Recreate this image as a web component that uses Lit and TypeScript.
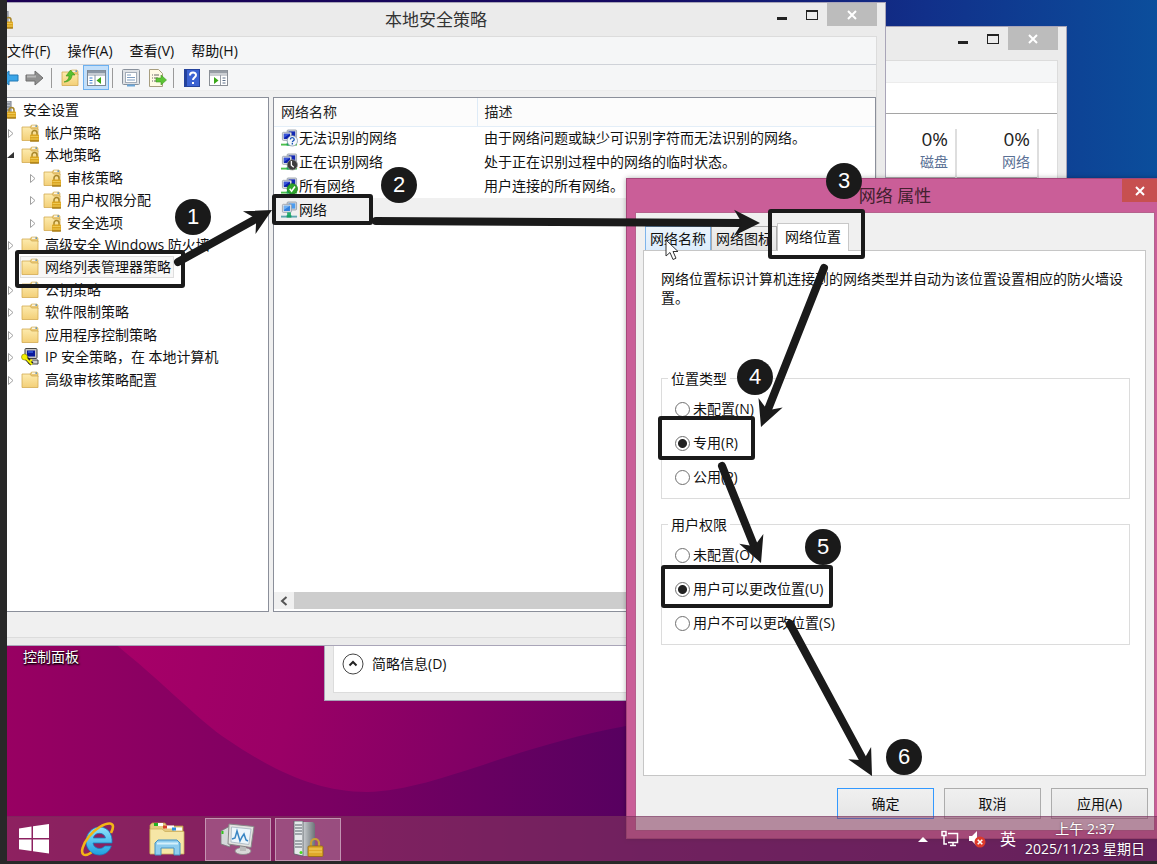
import { LitElement, html, css, svg, nothing } from 'lit';
import { customElement, state } from 'lit/decorators.js';
import { classMap } from 'lit/directives/class-map.js';

interface TreeNode {
  label: string;
  level: number;
  icon: 'server' | 'folder' | 'folder-lock' | 'ipsec';
  expander?: 'open' | 'closed';
}

const TREE: TreeNode[] = [
  { label: '安全设置', level: 0, icon: 'server' },
  { label: '帐户策略', level: 1, icon: 'folder-lock', expander: 'closed' },
  { label: '本地策略', level: 1, icon: 'folder-lock', expander: 'open' },
  { label: '审核策略', level: 2, icon: 'folder-lock', expander: 'closed' },
  { label: '用户权限分配', level: 2, icon: 'folder-lock', expander: 'closed' },
  { label: '安全选项', level: 2, icon: 'folder-lock', expander: 'closed' },
  { label: '高级安全 Windows 防火墙', level: 1, icon: 'folder', expander: 'closed' },
  { label: '网络列表管理器策略', level: 1, icon: 'folder' },
  { label: '公钥策略', level: 1, icon: 'folder', expander: 'closed' },
  { label: '软件限制策略', level: 1, icon: 'folder', expander: 'closed' },
  { label: '应用程序控制策略', level: 1, icon: 'folder', expander: 'closed' },
  { label: 'IP 安全策略，在 本地计算机', level: 1, icon: 'ipsec', expander: 'closed' },
  { label: '高级审核策略配置', level: 1, icon: 'folder', expander: 'closed' },
];

const NETWORKS = [
  { name: '无法识别的网络', badge: 'unknown', text: '由于网络问题或缺少可识别字符而无法识别的网络。' },
  { name: '正在识别网络', badge: 'busy', text: '处于正在识别过程中的网络的临时状态。' },
  { name: '所有网络', badge: 'ok', text: '用户连接的所有网络。' },
  { name: '网络', badge: '', text: '' },
];

const STEPS = [
  { x: 186, y: 217 },
  { x: 392, y: 185 },
  { x: 837, y: 181 },
  { x: 748, y: 377 },
  { x: 816, y: 547 },
  { x: 897, y: 757 },
];

// x, y, width, height of each highlighted area on the desktop
const FRAMES = [
  [10, 252, 166, 34],
  [267, 196, 97, 27],
  [763, 211, 93, 46],
  [653, 418, 93, 40],
  [656, 567, 168, 39],
];

// x1, y1, x2, y2
const ARROWS = [
  [171, 262, 265, 210],
  [369, 221, 753, 223],
  [817, 268, 754, 427],
  [715, 466, 754, 563],
  [783, 624, 865, 776],
];

const lock = (x: number, y: number) => svg`
  <g transform="translate(${x} ${y})">
    <path d="M2 5V3a2.5 2.5 0 0 1 5 0v2" fill="none" stroke="#a8862a" stroke-width="1.5"/>
    <rect x="0" y="4.5" width="9" height="7" rx="1" fill="#dba520"/>
    <path d="M0.5 6.5h8M0.5 9h8" stroke="#f3d060" stroke-width="0.8"/>
    <path d="M0 11h9" stroke="#8f6812"/>
  </g>`;

const folder = svg`
  <path d="M9 3l1.5-2H16l1 1.5V6H9z" fill="#e9c877" stroke="#cfa74e" stroke-width="0.6"/>
  <path d="M11 2.2h3.5" stroke="#fff" stroke-width="1.2"/>
  <path d="M14.5 2.2h1.5" stroke="#3d8ad8" stroke-width="1.2"/>
  <path d="M1 3h8l1.5 2H17v11.5H1z" fill="url(#folder-fill)" stroke="#d3ab52" stroke-width="0.8"/>`;

const folderFill = svg`
  <defs>
    <linearGradient id="folder-fill" x1="0" y1="0" x2="0" y2="1">
      <stop offset="0" stop-color="#fdebae"/><stop offset="1" stop-color="#f3cf77"/>
    </linearGradient>
  </defs>`;

const monitors = (dark: boolean) => svg`
  <rect x="6.5" y="0.5" width="10" height="8.5" rx="1" fill="#cfd3d8" stroke="#8d96a3" stroke-width="0.8"/>
  <rect x="8" y="2" width="7" height="5.5" fill="${dark ? '#1227b5' : '#4b9cf0'}"/>
  <rect x="1.5" y="3" width="9.5" height="8.5" rx="1" fill="#dfe3e8" stroke="#8d96a3" stroke-width="0.8"/>
  <rect x="3" y="4.5" width="6.5" height="5.5" fill="${dark ? '#0b1fae' : '#2f7fe0'}"/>
  <path d="M3 4.5h6.5L3 9z" fill="${dark ? '#4c6bea' : '#8cc4fa'}" opacity="0.7"/>
  <rect x="6.5" y="11.5" width="4" height="4" fill="#27ae70"/>
  <path d="M0 16h17" stroke="${dark ? '#4cc04c' : '#5ea6b0'}" stroke-width="2"/>
  <rect x="6" y="14.5" width="5" height="2.5" fill="#17a060"/>`;

@customElement('app-root')
export class AppRoot extends LitElement {
  @state() private selectedNode = 7;
  @state() private selectedNetwork = 3;
  @state() private activeTab = 2;

  static styles = css`
    :host {
      display: block;
      box-sizing: border-box;
      height: 100vh;
      padding: 0 0 3px 7px;
      background: #282828;
      color: #111;
      font: 14px/20px "Open Sans", "Noto Sans CJK SC", sans-serif;
    }

    * {
      box-sizing: border-box;
    }

    button {
      font: inherit;
      color: inherit;
      border: 0;
      padding: 0;
      background: none;
    }

    svg {
      display: block;
      flex: none;
    }

    .desktop {
      position: relative;
      height: 100%;
      overflow: hidden;
      background: #700062;
    }

    .wallpaper,
    .overlay {
      position: absolute;
      inset: 0;
      width: 100%;
      height: 100%;
    }

    .overlay {
      pointer-events: none;
    }

    .shortcut {
      position: absolute;
      left: 16px;
      top: 647px;
      color: #fff;
      text-decoration: none;
      text-shadow: 1px 1px 2px #000, 0 1px 2px #000;
    }

    /* windows */

    .window {
      position: absolute;
      display: flex;
      flex-direction: column;
      background: #ebebeb;
      border: 1px solid #a9a5b8;
    }

    .titlebar {
      display: grid;
      grid-template-columns: 1fr auto 1fr;
      height: 33px;
      padding-right: 8px;
      flex: none;
    }

    .titlebar h1 {
      margin: 0;
      padding-right: 12px;
      font-size: 17px;
      font-weight: 400;
      line-height: 34px;
      color: #333;
    }

    .app-icon {
      margin: 8px 0 0 -11px;
    }

    .controls {
      display: flex;
      justify-content: flex-end;
      align-items: flex-start;
    }

    .controls button {
      width: 30px;
      height: 23px;
      display: grid;
      place-items: center;
    }

    .controls .close {
      width: 50px;
      background: #bcbcbc;
    }

    .policy {
      left: -1px;
      top: 2px;
      width: 880px;
      height: 644px;
    }

    .client {
      flex: 1;
      display: flex;
      flex-direction: column;
      margin-right: 8px;
      background: #f0f0f0;
      border: 1px solid #dcdcdc;
      border-left: 0;
      min-height: 0;
    }

    .menubar {
      display: flex;
      gap: 17px;
      height: 28px;
      align-items: center;
      background: #f5f6f7;
      border-bottom: 1px solid #cfd2d8;
    }

    .toolbar {
      display: flex;
      align-items: center;
      height: 26px;
      background: #f5f6f7;
      border-bottom: 1px solid #ececec;
    }

    .toolbar button {
      width: 26px;
      height: 25px;
      display: grid;
      place-items: center;
    }

    .toolbar button:first-child {
      margin-left: -11px;
    }

    .toolbar .pressed {
      background: #c2dffa;
      border: 1px solid #6cb0f0;
    }

    .divider {
      width: 1px;
      height: 20px;
      margin: 0 5px 0 3px;
      background: #9a9a9a;
    }

    .panes {
      flex: 1;
      display: flex;
      gap: 4px;
      padding: 6px 0 0;
      min-height: 0;
    }

    .tree,
    .list {
      background: #fff;
      border: 1px solid #8b8f9a;
    }

    .tree {
      width: 262px;
      border-left: 0;
    }

    .tree ul {
      list-style: none;
      margin: 1px 0 0;
      padding: 0;
      min-height: 292px;
      display: grid;
      grid-auto-rows: 1fr;
    }

    .tree li {
      display: flex;
      align-items: center;
      gap: 3px;
      white-space: nowrap;
    }

    .tree .level-0 {
      margin-left: -8px;
    }

    .tree .level-2 {
      padding-left: 22px;
    }

    .twisty {
      width: 11px;
      height: 12px;
    }

    .node {
      display: flex;
      align-items: center;
      gap: 6px;
      padding-right: 2px;
    }

    .node.selected {
      background: #f7f7f7;
      outline: 1px solid #dedede;
    }

    .list {
      flex: 1;
      display: flex;
      flex-direction: column;
      justify-content: space-between;
      overflow: hidden;
    }

    .list table {
      width: 100%;
      border-collapse: collapse;
      table-layout: fixed;
      white-space: nowrap;
    }

    .list th {
      height: 28px;
      padding: 0 7px;
      text-align: left;
      font-weight: 400;
      background: #fcfcfc;
      border-bottom: 1px solid #e3eef8;
      color: #222;
    }

    .list th:first-child {
      width: 203px;
      border-right: 1px solid #deebf7;
    }

    .list td {
      height: 24px;
      padding: 0 7px;
    }

    .list .selected {
      background: #f0f0f0;
    }

    .item {
      display: flex;
      align-items: center;
      gap: 1px;
    }

    .scrollbar {
      display: flex;
      height: 17px;
      margin-bottom: 2px;
      background: #f0f0f0;
    }

    .scrollbar button {
      width: 20px;
      display: grid;
      place-items: center;
    }

    .thumb {
      flex: 1;
      background: #cdcdcd;
    }

    .statusbar {
      height: 25px;
    }

    .frame-bottom {
      height: 7px;
    }

    .taskman {
      left: 317px;
      top: 26px;
      width: 743px;
      height: 675px;
    }

    .taskman .client {
      margin: 0 8px;
      border-left: 1px solid #dcdcdc;
      background: #fff;
    }

    .strip {
      height: 22px;
      background: #f5f6f7;
      border-bottom: 1px solid #ececec;
    }

    .tabs-line {
      height: 31px;
      border-bottom: 1px solid #a5a5a5;
    }

    .usage {
      margin: 15px 18px 0 auto;
      border-collapse: collapse;
    }

    .usage th {
      width: 82px;
      height: 48px;
      padding: 0 7px 0 0;
      vertical-align: top;
      text-align: right;
      font-weight: 400;
      color: #5a7095;
      border-right: 2px solid #dedede;
      border-bottom: 1px solid #b0b0b0;
      line-height: 24px;
    }

    .usage strong {
      display: block;
      font-size: 19px;
      font-weight: 400;
      line-height: 21px;
      color: #222;
    }

    .fewer {
      display: flex;
      align-items: center;
      gap: 8px;
      margin: auto 0 17px 8px;
      line-height: 22px;
    }

    /* properties dialog */

    .dialog {
      left: 619px;
      top: 178px;
      width: 538px;
      height: 661px;
      padding: 0 8px 7px;
      background: #ca5e98;
      border-color: #a5477a;
      box-shadow: 0 0 5px rgba(0, 0, 0, 0.3);
    }

    .dialog .titlebar {
      padding: 0;
    }

    .dialog h1 {
      padding: 0;
      color: #43202f;
    }

    .dialog .controls .close {
      width: 35px;
      margin-right: -2px;
      background: #c75050;
    }

    .sheet {
      flex: 1;
      display: flex;
      flex-direction: column;
      background: #f0f0f0;
      border: 1px solid #b5628d;
      padding-top: 10px;
    }

    .tabs {
      display: flex;
      align-items: flex-end;
      padding-left: 9px;
    }

    .tabs button {
      height: 24px;
      padding: 0 4px;
      background: linear-gradient(#f0f0f0, #e5e5e5);
      border: 1px solid #acacac;
      border-bottom: 0;
      line-height: 23px;
    }

    .tabs .hot {
      background: linear-gradient(#ecf4fc, #dcecfc);
      border-color: #7eb4ea;
    }

    .tabs .active {
      height: 28px;
      padding: 0 7px 3px;
      background: #fff;
      border-color: #c8c8c8;
      position: relative;
      margin-bottom: -1px;
    }

    .page {
      flex: 1;
      margin: 0 8px 12px 7px;
      padding: 18px 15px 0 17px;
      background: #fff;
      border: 1px solid #c6c6c6;
    }

    .page p {
      margin: 0 0 62px;
      line-height: 19px;
    }

    fieldset {
      margin: 0 0 16px;
      padding: 4px 13px;
      border: 1px solid #dcdcdc;
    }

    legend {
      margin-left: -7px;
      padding: 0 3px;
      line-height: 19px;
    }

    .option {
      display: flex;
      align-items: center;
      gap: 3px;
      height: 34px;
    }

    .option input {
      appearance: none;
      width: 15px;
      height: 15px;
      margin: 0;
      border: 1px solid #707070;
      border-radius: 50%;
      background: #fff;
    }

    .option input:checked {
      background: radial-gradient(circle, #222 4px, #fff 5px);
    }

    .actions {
      display: flex;
      justify-content: flex-end;
      gap: 10px;
      padding: 0 6px 11px 0;
    }

    .actions button {
      width: 97px;
      height: 31px;
      background: linear-gradient(#f0f0f0, #e5e5e5);
      border: 1px solid #acacac;
    }

    .actions button.primary {
      border: 1px solid #3399ff;
    }

    .cursor {
      position: absolute;
      left: 658px;
      top: 239px;
    }

    /* taskbar */

    .taskbar {
      position: absolute;
      left: 0;
      right: 0;
      bottom: 0;
      height: 45px;
      display: flex;
      align-items: center;
      background: rgba(133, 58, 95, 0.56);
      border-top: 1px solid rgba(110, 40, 90, 0.4);
      color: #fff;
    }

    .apps {
      display: flex;
      gap: 4px;
      flex: 1;
    }

    .apps button {
      width: 66px;
      height: 43px;
      display: grid;
      place-items: center;
    }

    .apps .start {
      width: 54px;
    }

    .apps .running {
      background: rgba(255, 255, 255, 0.2);
      border: 1px solid rgba(255, 255, 255, 0.4);
    }

    .tray {
      display: flex;
      align-items: center;
      gap: 9px;
      padding-right: 12px;
    }

    .expand {
      margin-right: 4px;
    }

    .ime {
      font-size: 16px;
      margin-left: 4px;
    }

    .clock {
      text-align: center;
      text-shadow: 0 0 2px rgba(0, 0, 0, 0.5);
    }

    .clock span {
      display: block;
    }

    /* step marks */

    .steps {
      list-style: none;
      margin: 0;
      padding: 0;
    }

    .steps li {
      position: absolute;
      width: 36px;
      height: 36px;
      margin: -18px 0 0 -18px;
      border-radius: 50%;
      background: #1a1a1a;
      color: #fff;
      font: 22px/36px "Liberation Sans", sans-serif;
      text-align: center;
    }
  `;

  private renderWallpaper() {
    return html`
      <svg class="wallpaper" viewBox="0 0 1150 861" preserveAspectRatio="none">
        <defs>
          <linearGradient id="sky" x1="0" x2="1" y1="0" y2="0">
            <stop offset="0" stop-color="#1b0052"/>
            <stop offset="0.55" stop-color="#150a62"/>
            <stop offset="0.8" stop-color="#11308a"/>
            <stop offset="1" stop-color="#0b4e9c"/>
          </linearGradient>
          <linearGradient id="bright" x1="100" x2="640" y1="640" y2="760" gradientUnits="userSpaceOnUse">
            <stop offset="0" stop-color="#a80068"/>
            <stop offset="0.35" stop-color="#9a0066"/>
            <stop offset="1" stop-color="#6a0064"/>
          </linearGradient>
          <linearGradient id="shade" x1="0" x2="1150" y1="0" y2="0" gradientUnits="userSpaceOnUse">
            <stop offset="0" stop-color="#980062"/>
            <stop offset="0.28" stop-color="#7a0062"/>
            <stop offset="0.55" stop-color="#560060"/>
            <stop offset="1" stop-color="#3c0058"/>
          </linearGradient>
        </defs>
        <rect width="1150" height="430" fill="url(#sky)"/>
        <rect y="430" width="1150" height="431" fill="url(#bright)"/>
        <path
          d="M0 600L90 630C150 675 190 720 221 740C265 770 310 792 360 792C430 790 500 748 619 726L1150 700V861H0z"
          fill="url(#shade)"
        />
      </svg>
    `;
  }

  private renderControls() {
    return html`
      <div class="controls">
        <button aria-label="最小化">
          <svg width="12" height="12"><path d="M1 9.5h10" stroke="#222" stroke-width="3"/></svg>
        </button>
        <button aria-label="最大化">
          <svg width="12" height="12">
            <rect x="0.5" y="1.5" width="11" height="9" fill="none" stroke="#222"/>
            <path d="M0 2h12" stroke="#222" stroke-width="2"/>
          </svg>
        </button>
        ${this.renderClose()}
      </div>
    `;
  }

  private renderClose() {
    return html`
      <button class="close" aria-label="关闭">
        <svg width="10" height="10">
          <path d="M1 1l8 8M9 1l-8 8" stroke="#fff" stroke-width="2"/>
        </svg>
      </button>
    `;
  }

  private renderTaskManager() {
    return html`
      <section class="window taskman">
        <div class="titlebar"><span></span><span></span>${this.renderControls()}</div>
        <div class="client">
          <div class="strip"></div>
          <div class="tabs-line"></div>
          <table class="usage">
            <tr>
              <th><strong>0%</strong>磁盘</th>
              <th><strong>0%</strong>网络</th>
            </tr>
          </table>
          <button class="fewer">
            <svg width="22" height="22">
              <circle cx="11" cy="11" r="10" fill="#fff" stroke="#444"/>
              <path d="M7.5 12.5L11 9l3.5 3.5" fill="none" stroke="#222" stroke-width="2"/>
            </svg>
            简略信息(D)
          </button>
        </div>
        <div class="frame-bottom"></div>
      </section>
    `;
  }

  private renderNodeIcon(icon: string) {
    if (icon === 'server') {
      return html`<svg width="18" height="18">
        <rect x="3" y="0" width="9" height="16" fill="#b9bec6" stroke="#767d88"/>
        <path d="M4 3h7M4 6h7M4 9h7" stroke="#6b7481"/>
        ${lock(8, 6)}
      </svg>`;
    }
    if (icon === 'ipsec') {
      return html`<svg width="18" height="18">
        <rect x="4" y="0.5" width="12" height="10" rx="1" fill="#c4c4c4" stroke="#444"/>
        <rect x="6" y="2.5" width="8" height="6" fill="#0a1a9c"/>
        <path d="M7 4h5" stroke="#4c7cff"/>
        <path d="M6 12h11v4H8z" fill="#d0d0d0" stroke="#444"/>
        <path d="M3 8l8 8" stroke="#222" stroke-width="4"/>
        <circle cx="3.5" cy="9" r="3" fill="#f4f000" stroke="#7a7a00" stroke-width="0.6"/>
        <path d="M4 9.5l7 7M9 13l2-1" stroke="#f4f000" stroke-width="2"/>
      </svg>`;
    }
    return html`<svg width="18" height="18">
      ${folderFill}${folder}${icon === 'folder-lock' ? lock(9, 6) : nothing}
    </svg>`;
  }

  private renderTwisty(state?: string) {
    return html`
      <svg class="twisty">
        ${state === 'closed'
          ? svg`<path d="M1.5 2.5v8l4.5-4z" fill="#fff" stroke="#a0a0a0"/>`
          : nothing}
        ${state === 'open' ? svg`<path d="M7 3v6H0z" fill="#333"/>` : nothing}
      </svg>
    `;
  }

  private renderTree() {
    return html`
      <nav class="tree">
        <ul role="tree">
          ${TREE.map(
            (node, i) => html`
              <li
                class="level-${node.level}"
                role="treeitem"
                aria-level=${node.level + 1}
                @click=${() => (this.selectedNode = i)}
              >
                ${node.level ? this.renderTwisty(node.expander) : nothing}
                <span class=${classMap({ node: true, selected: i === this.selectedNode })}>
                  ${this.renderNodeIcon(node.icon)}<span>${node.label}</span>
                </span>
              </li>
            `
          )}
        </ul>
      </nav>
    `;
  }

  private renderNetworkIcon(badge: string) {
    return html`
      <svg width="17" height="18" viewBox="0 0 18 18">
        ${monitors(badge !== '')}
        ${badge === 'unknown'
          ? svg`<circle cx="12" cy="12" r="5.5" fill="#f4f8fc" stroke="#8796a8" stroke-width="0.8"/>
              <path d="M10 10.5c0-2.6 4-2.4 4 0 0 1.4-2 1.4-2 3M12 14.3v1.5" fill="none" stroke="#1c55b8" stroke-width="1.4"/>`
          : nothing}
        ${badge === 'busy'
          ? svg`<circle cx="12" cy="12" r="5.5" fill="#3c3c3c" stroke="#9a9a9a" stroke-width="0.8"/>
              <path d="M11 8v4.5l2.5 2" fill="none" stroke="#fff" stroke-width="1.4"/>`
          : nothing}
        ${badge === 'ok'
          ? svg`<circle cx="12" cy="12" r="5.5" fill="#2fa52b" stroke="#1c7d1a" stroke-width="0.8"/>
              <path d="M9.2 12l2 2.5 3.6-5" fill="none" stroke="#fff" stroke-width="1.7"/>`
          : nothing}
      </svg>
    `;
  }

  private renderToolbar() {
    return html`
      <div class="toolbar">
        <button aria-label="后退">
          <svg width="20" height="16">
            <path d="M19 5h-9V1L1 8l9 7v-4h9z" fill="#3aa5e8" stroke="#2378b4"/>
          </svg>
        </button>
        <button aria-label="前进">
          <svg width="20" height="16">
            <path d="M1 5h9V1l8 7-8 7v-4H1z" fill="#8f8f8f" stroke="#6f6f6f"/>
            <path d="M2 6.5h9" stroke="#b8b8b8" stroke-width="2"/>
          </svg>
        </button>
        <span class="divider"></span>
        <button aria-label="上一级">
          <svg width="18" height="18">
            ${folderFill}${folder}
            <path d="M3 13c3-1 5-3 5-6H5l4.5-6L14 6h-3c0 4-3 7-8 7z" fill="#57c02e" stroke="#3b9418" stroke-width="0.6"/>
          </svg>
        </button>
        <button class="pressed" aria-label="显示树">
          <svg width="19" height="16">
            <rect x="0.5" y="0.5" width="18" height="15" fill="#fff" stroke="#7c8794"/>
            <path d="M1 2h17" stroke="#8a96a5" stroke-width="3"/>
            <path d="M1 5h17M8 5v10" stroke="#8a96a5"/>
            <path d="M2.5 8h3M2.5 10.5h3M2.5 13h3" stroke="#3d7fd0"/>
            <path d="M14 7v7l-4.5-3.5z" fill="#3aa818"/>
          </svg>
        </button>
        <span class="divider"></span>
        <button aria-label="属性">
          <svg width="18" height="18">
            <rect x="0.5" y="0.5" width="17" height="15" rx="1" fill="#dfe2e6" stroke="#88909b"/>
            <rect x="3.5" y="3.5" width="11" height="10" fill="#fff" stroke="#a3acb8"/>
            <path d="M5 6h4M5 8.5h8M5 11h8" stroke="#7d9cc0"/>
            <path d="M5 16.5h8" stroke="#6aa6d8" stroke-width="2"/>
          </svg>
        </button>
        <button aria-label="导出列表">
          <svg width="19" height="18">
            <path d="M1.5 0.5h9l4 4v13h-13z" fill="#fffbe6" stroke="#a79e80"/>
            <path d="M4 6h1M4 9h1M4 12h1M6 6h5M6 9h4M6 12h4" stroke="#666"/>
            <path d="M8 9h5V6l5.500 5-5.500 5v-3H8z" fill="#5cc436" stroke="#3f9a20" stroke-width="0.6"/>
          </svg>
        </button>
        <span class="divider"></span>
        <button aria-label="帮助">
          <svg width="16" height="18">
            <rect x="0.5" y="0.5" width="15" height="17" fill="#3b62d2" stroke="#24429c"/>
            <path d="M2 1v16" stroke="#24429c" stroke-width="2"/>
            <path d="M6 6.5c0-4 6-3.8 6-.5 0 2.5-3 2.5-3 5M9 13v2" fill="none" stroke="#fff" stroke-width="2"/>
          </svg>
        </button>
        <button aria-label="操作窗格">
          <svg width="19" height="16">
            <rect x="0.5" y="0.5" width="18" height="15" fill="#fff" stroke="#8a8f96"/>
            <path d="M1 2h17" stroke="#989ea6" stroke-width="3"/>
            <path d="M1 5h17M11.5 5v10" stroke="#989ea6"/>
            <path d="M13.5 8h3M13.5 10.5h3M13.5 13h3" stroke="#5c6f88"/>
            <path d="M5 7v7l4.5-3.5z" fill="#3aa818"/>
          </svg>
        </button>
      </div>
    `;
  }

  private renderPolicyWindow() {
    return html`
      <section class="window policy">
        <div class="titlebar">
          <div class="app-icon">${this.renderNodeIcon('server')}</div>
          <h1>本地安全策略</h1>
          ${this.renderControls()}
        </div>
        <div class="client">
          <div class="menubar">
            <button>文件(F)</button>
            <button>操作(A)</button>
            <button>查看(V)</button>
            <button>帮助(H)</button>
          </div>
          ${this.renderToolbar()}
          <div class="panes">
            ${this.renderTree()}
            <div class="list">
              <table>
                <thead>
                  <tr>
                    <th>网络名称</th>
                    <th>描述</th>
                  </tr>
                </thead>
                <tbody>
                  ${NETWORKS.map(
                    (net, i) => html`
                      <tr
                        class=${classMap({ selected: i === this.selectedNetwork })}
                        @click=${() => (this.selectedNetwork = i)}
                      >
                        <td>
                          <span class="item">${this.renderNetworkIcon(net.badge)}${net.name}</span>
                        </td>
                        <td>${net.text}</td>
                      </tr>
                    `
                  )}
                </tbody>
              </table>
              <div class="scrollbar">
                <button aria-label="向左滚动">
                  <svg width="8" height="10">
                    <path d="M6.5 1L2 5l4.5 4" fill="none" stroke="#555" stroke-width="2"/>
                  </svg>
                </button>
                <div class="thumb"></div>
              </div>
            </div>
          </div>
          <div class="statusbar"></div>
        </div>
        <div class="frame-bottom"></div>
      </section>
    `;
  }

  private renderOption(group: string, label: string, checked = false) {
    return html`
      <label class="option">
        <input type="radio" name=${group} ?checked=${checked} />
        <span>${label}</span>
      </label>
    `;
  }

  private renderDialog() {
    const tabs = ['网络名称', '网络图标', '网络位置'];
    return html`
      <section class="window dialog" role="dialog" aria-label="网络 属性">
        <div class="titlebar">
          <span></span>
          <h1>网络 属性</h1>
          <div class="controls">${this.renderClose()}</div>
        </div>
        <div class="sheet">
          <div class="tabs" role="tablist">
            ${tabs.map(
              (tab, i) => html`
                <button
                  role="tab"
                  class=${classMap({ hot: i === 0, active: i === this.activeTab })}
                  @click=${() => (this.activeTab = i)}
                >${tab}</button>
              `
            )}
          </div>
          <div class="page" role="tabpanel">
            <p>网络位置标识计算机连接到的网络类型并自动为该位置设置相应的防火墙设置。</p>
            <fieldset>
              <legend>位置类型</legend>
              ${this.renderOption('type', '未配置(N)')}
              ${this.renderOption('type', '专用(R)', true)}
              ${this.renderOption('type', '公用(P)')}
            </fieldset>
            <fieldset>
              <legend>用户权限</legend>
              ${this.renderOption('rights', '未配置(O)')}
              ${this.renderOption('rights', '用户可以更改位置(U)', true)}
              ${this.renderOption('rights', '用户不可以更改位置(S)')}
            </fieldset>
          </div>
          <div class="actions">
            <button class="primary">确定</button>
            <button>取消</button>
            <button>应用(A)</button>
          </div>
        </div>
      </section>
    `;
  }

  private renderTaskbar() {
    return html`
      <footer class="taskbar">
        <div class="apps">
          <button class="start" aria-label="开始">
            <svg width="30" height="30">
              <path d="M0 4.5L12.5 2.5V14H0zM14 2.2L30 0v14H14zM0 15.5h12.5V27L0 25.2zM14 15.5h16V29.5L14 27.3z" fill="#fff"/>
            </svg>
          </button>
          <button aria-label="Internet Explorer">
            <svg width="36" height="36">
              <defs>
                <linearGradient id="ie" x1="0" y1="0" x2="0" y2="1">
                  <stop offset="0" stop-color="#8fe3fb"/><stop offset="1" stop-color="#1f9fe0"/>
                </linearGradient>
              </defs>
              <path
                d="M32 22H13c.3 3 3 5.500 6.500 5.500 2.300 0 4.200-1 5.200-2.500h6.600C29.500 30.500 25 34 19.500 34 12 34 6 28 6 20.500S12 6 19.500 6C27.500 6 32.800 12.500 32 22zM13.300 17h12.200c-.5-2.800-3-4.700-6.100-4.700s-5.500 1.900-6.100 4.700z"
                fill="url(#ie)" stroke="#1580c4" stroke-width="0.8"
              />
              <path
                d="M31 12c3-6 2.500-9-1-9.500C24.500 2 15 8 9 15.500 2.500 23.500.5 31.500 3.500 33.500c2 1.200 5 0 8-2"
                fill="none" stroke="#f3b516" stroke-width="2.6"
              />
            </svg>
          </button>
          <button aria-label="文件资源管理器">
            <svg width="38" height="36">
              <path d="M3 2h13l2 3h16v27H1V4z" fill="#e4cb80" stroke="#b59545" stroke-width="0.8"/>
              <path d="M5 3.5h9M16 6h9M25 8h8" stroke="#fff" stroke-width="3"/>
              <path d="M5 3.5h4" stroke="#22b422" stroke-width="3"/>
              <path d="M14 6h4" stroke="#d8412a" stroke-width="3"/>
              <path d="M23 8h4" stroke="#2c8fe0" stroke-width="3"/>
              <path d="M1 8h12l3 2.5h19V33H1z" fill="#f6e6a6" stroke="#cdb05c" stroke-width="0.8"/>
              <path d="M6 34V22l3-3h19l3 3v12h-6v-7H12v7z" fill="#8fcdee" stroke="#4592c2"/>
              <path d="M8 22.5h21" stroke="#d5f0fc" stroke-width="2"/>
            </svg>
          </button>
          <button class="running" aria-label="任务管理器">
            <svg width="36" height="32">
              <path d="M1 8l9-5v21l-9-3z" fill="#d5d8da" stroke="#777" stroke-width="0.8"/>
              <path d="M2.5 8v3" stroke="#35c51d" stroke-width="2"/>
              <ellipse cx="23" cy="28" rx="8" ry="3.5" fill="#d8d8d8" stroke="#888" stroke-width="0.8"/>
              <path d="M20 22h6v6h-6z" fill="#bbb"/>
              <path d="M9 1l25 2.5-3 21L8 21z" fill="#e2e2e0" stroke="#888"/>
              <path d="M11.5 4l19.5 2-2.2 15.5L11 19z" fill="#eef6fb" stroke="#a5b5c0" stroke-width="0.8"/>
              <path d="M12 16l3-1 2-7 3 10 2-4 2-3 2 6 2 1" fill="none" stroke="#3a86c4" stroke-width="1.5"/>
            </svg>
          </button>
          <button class="running" aria-label="本地安全策略">
            <svg width="34" height="36">
              <defs>
                <linearGradient id="tower" x1="0" x2="1" y1="0" y2="0">
                  <stop offset="0" stop-color="#c9cdd0"/><stop offset="1" stop-color="#6d7478"/>
                </linearGradient>
              </defs>
              <path d="M12 1h10l2 2v30l-6 2h-6z" fill="url(#tower)"/>
              <path d="M3 0h9v35l-9-2z" fill="#e6e9eb" stroke="#555d63" stroke-width="0.8"/>
              <path d="M4 4h7M4 7h7M4 10h7M4 13h7M4 20h7M4 23h7M4 26h7" stroke="#59626a" stroke-width="1.2"/>
              <circle cx="10" cy="31.5" r="1.5" fill="#46e01c"/>
              <path d="M20 26v-4a4 4 0 0 1 8 0v4" fill="none" stroke="#c9a136" stroke-width="2.2"/>
              <rect x="17" y="25" width="15" height="10.5" rx="1" fill="#dfa92a" stroke="#93690f" stroke-width="0.8"/>
              <path d="M18 28h13M18 31h13" stroke="#f5d268"/>
            </svg>
          </button>
        </div>
        <div class="tray">
          <svg class="expand" width="10" height="6"><path d="M0 6l5-5 5 5z" fill="#fff"/></svg>
          <svg width="18" height="18" fill="none" stroke="#fff">
            <path d="M7 3.5h9.500v9H7M9 15.500h6M12 12v3.500" stroke-width="1.500"/>
            <path d="M1 1.500h4v4H1zM3 6v8h3" stroke-width="1.500"/>
          </svg>
          <svg width="19" height="18">
            <path d="M1 6h3l5-5v15l-5-5H1z" fill="#fff"/>
            <circle cx="12" cy="12" r="5.5" fill="#dd3a2c"/>
            <path d="M9.7 9.7l4.600 4.600M14.300 9.700l-4.600 4.600" stroke="#fff" stroke-width="1.6"/>
          </svg>
          <span class="ime">英</span>
          <div class="clock"><span>上午 2:37</span><span>2025/11/23 星期日</span></div>
        </div>
      </footer>
    `;
  }

  private renderArrow([x1, y1, x2, y2]: number[]) {
    const angle = (Math.atan2(y2 - y1, x2 - x1) * 180) / Math.PI;
    const length = Math.hypot(x2 - x1, y2 - y1);
    return svg`
      <g transform="translate(${x2} ${y2}) rotate(${angle})">
        <path d="M${-length} 0H-17" stroke="#1a1a1a" stroke-width="8" stroke-linecap="round"/>
        <path d="M0 0L-26 -13L-18 0L-26 13z" fill="#1a1a1a"/>
      </g>
    `;
  }

  render() {
    return html`
      <main class="desktop">
        ${this.renderWallpaper()}
        <a class="shortcut" href="#control-panel">控制面板</a>
        ${this.renderTaskManager()} ${this.renderPolicyWindow()} ${this.renderDialog()}
        ${this.renderTaskbar()}
        <svg class="cursor" width="15" height="22">
          <path d="M1 1v16l4-3.500 3 7 3-1.300-3-6.700h5z" fill="#fff" stroke="#333"/>
        </svg>
        <svg class="overlay">
          ${FRAMES.map(
            ([x, y, w, h]) => svg`
              <rect x=${x} y=${y} width=${w} height=${h} rx="1" fill="none" stroke="#1a1a1a" stroke-width="4"/>
            `
          )}
          ${ARROWS.map((arrow) => this.renderArrow(arrow))}
        </svg>
        <ol class="steps">
          ${STEPS.map((step, i) => html`<li style="left:${step.x}px;top:${step.y}px">${i + 1}</li>`)}
        </ol>
      </main>
    `;
  }
}
